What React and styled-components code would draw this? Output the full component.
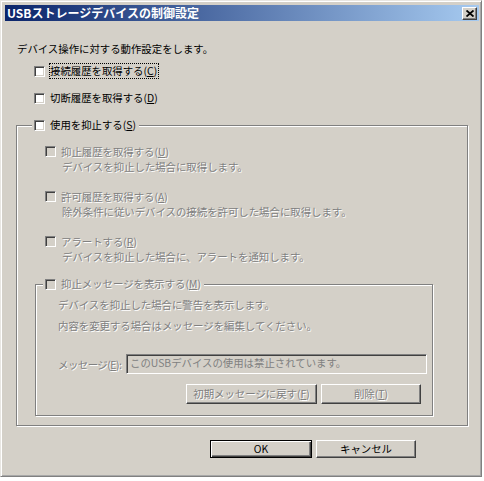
import styled, { createGlobalStyle } from 'styled-components';

const GlobalStyle = createGlobalStyle`
  html, body {
    margin: 0;
    padding: 0;
    background: #fff;
  }
  body {
    font-family: 'Noto Sans CJK JP', 'Noto Sans', sans-serif;
    font-size: 10.4px;
    color: #000;
  }
  * {
    box-sizing: border-box;
  }
`;

const Checkbox = ({ disabled }) => <Box $disabled={disabled} />;

const CheckRow = ({ label, disabled, focused, lh = 14 }) => (
  <Row $lh={lh}>
    <Checkbox disabled={disabled} />
    <Label $disabled={disabled} $focused={focused}>
      {label}
    </Label>
  </Row>
);

const Item = ({ label, desc }) => (
  <ItemBlock>
    <CheckRow label={label} disabled lh={13} />
    <Desc>{desc}</Desc>
  </ItemBlock>
);

const App = () => {
  return (
    <>
      <GlobalStyle />
      <Window>
        <TitleBar>
          <span>USBストレージデバイスの制御設定</span>
          <CloseButton>
            <svg width='8' height='7' viewBox='0 0 8 7'>
              <path d='M0.5 0.5 L7.5 6.5 M7.5 0.5 L0.5 6.5' stroke='#000' strokeWidth='1.8' />
            </svg>
          </CloseButton>
        </TitleBar>
        <Body>
          <Intro>デバイス操作に対する動作設定をします。</Intro>
          <TopRow>
            <CheckRow
              focused
              label={
                <>
                  接続履歴を取得する(<u>C</u>)
                </>
              }
            />
          </TopRow>
          <TopRow $gap={13}>
            <CheckRow
              label={
                <>
                  切断履歴を取得する(<u>D</u>)
                </>
              }
            />
          </TopRow>
          <OuterGroup>
            <Legend $ml={15}>
              <CheckRow
                label={
                  <>
                    使用を抑止する(<u>S</u>)
                  </>
                }
              />
            </Legend>
            <OuterBody>
              <Item
                label={
                  <>
                    抑止履歴を取得する(<u>U</u>)
                  </>
                }
                desc='デバイスを抑止した場合に取得します。'
              />
              <Item
                label={
                  <>
                    許可履歴を取得する(<u>A</u>)
                  </>
                }
                desc='除外条件に従いデバイスの接続を許可した場合に取得します。'
              />
              <Item
                label={
                  <>
                    アラートする(<u>R</u>)
                  </>
                }
                desc='デバイスを抑止した場合に、アラートを通知します。'
              />
              <InnerGroup>
                <Legend $ml={7}>
                  <CheckRow
                    disabled
                    label={
                      <>
                        抑止メッセージを表示する(<u>M</u>)
                      </>
                    }
                  />
                </Legend>
                <InnerBody>
                  <Note>デバイスを抑止した場合に警告を表示します。</Note>
                  <Note $gap={7}>内容を変更する場合はメッセージを編集してください。</Note>
                  <MessageRow>
                    <MessageLabel>
                      メッセージ(<u>E</u>):
                    </MessageLabel>
                    <MessageInput>このUSBデバイスの使用は禁止されています。</MessageInput>
                  </MessageRow>
                  <ButtonRow>
                    <Button $w={131} $h={20} disabled>
                      初期メッセージに戻す(<u>F</u>)
                    </Button>
                    <Button $w={100} $h={20} disabled>
                      削除(<u>T</u>)
                    </Button>
                  </ButtonRow>
                </InnerBody>
              </InnerGroup>
            </OuterBody>
          </OuterGroup>
          <Footer>
            <Button $w={102} $h={18} $default>
              OK
            </Button>
            <Button $w={100} $h={18}>
              キャンセル
            </Button>
          </Footer>
        </Body>
      </Window>
    </>
  );
};

const Window = styled.div`
  display: flex;
  flex-direction: column;
  width: 482px;
  height: 477px;
  padding: 4px 2px 3px 4px;
  background: #d4d0c8;
  border: 1px solid;
  border-color: #e8e6e2 #808080 #808080 #e8e6e2;
  box-shadow: inset 1px 1px 0 #fff, inset -1px -1px 0 #a8a8a8;
`;

const TitleBar = styled.div`
  display: flex;
  align-items: center;
  justify-content: space-between;
  height: 16px;
  padding: 0 2px 0 2px;
  background: linear-gradient(to right, #0a246a, #a6caf0);
  color: #fff;
  font-weight: 700;
  font-size: 12px;
  line-height: 16px;
`;

const CloseButton = styled.button`
  display: flex;
  align-items: center;
  justify-content: center;
  width: 15px;
  height: 13px;
  padding: 0;
  background: #d4d0c8;
  border: 1px solid;
  border-color: #fff #404040 #404040 #fff;
  box-shadow: inset -1px -1px 0 #808080;
`;

const Body = styled.div`
  display: flex;
  flex-direction: column;
  padding: 0 0 0 11px;
`;

const Intro = styled.div`
  margin: 21px 0 0 1px;
  line-height: 14px;
`;

const TopRow = styled.div`
  margin: ${({ $gap }) => $gap || 8}px 0 0 18px;
`;

const Row = styled.div`
  display: flex;
  align-items: center;
  gap: 5px;
  height: ${({ $lh }) => $lh}px;
  line-height: ${({ $lh }) => $lh}px;
  white-space: nowrap;
`;

const Box = styled.span`
  flex: none;
  width: 11px;
  height: 11px;
  background: ${({ $disabled }) => ($disabled ? '#d4d0c8' : '#fff')};
  border: 1px solid;
  border-color: #808080 #fff #fff #808080;
  box-shadow: inset 1px 1px 0 #404040, inset -1px -1px 0 #d4d0c8;
`;

const Label = styled.span`
  padding: 0 1px 0 0;
  outline: ${({ $focused }) => ($focused ? '1px dotted #000' : 'none')};
  outline-offset: 0;
  color: ${({ $disabled }) => ($disabled ? '#808080' : '#000')};
  text-shadow: ${({ $disabled }) => ($disabled ? '1px 1px 0 #fff' : 'none')};
  u {
    text-underline-offset: 1px;
  }
`;

const Group = styled.fieldset`
  margin: 0;
  padding: 0;
  min-width: 0;
  border: 1px solid #808080;
  box-shadow: inset 1px 1px 0 #fff, 1px 1px 0 #fff;
`;

const OuterGroup = styled(Group)`
  width: 452px;
  margin-top: 13px;
`;

const InnerGroup = styled(Group)`
  width: 398px;
  margin: 14px 0 0 -10px;
`;

const Legend = styled.legend`
  margin-left: ${({ $ml }) => $ml}px;
  padding: 0 2px;
  background: #d4d0c8;
`;

const OuterBody = styled.div`
  padding: 13px 10px 9px 28px;
`;

const ItemBlock = styled.div`
  & + & {
    margin-top: 17px;
  }
`;

const Desc = styled.div`
  margin: 2px 0 0 17px;
  line-height: 13px;
  color: #808080;
  text-shadow: 1px 1px 0 #fff;
  white-space: nowrap;
`;

const InnerBody = styled.div`
  padding: 7px 11px 11px 22px;
`;

const Note = styled.div`
  margin-top: ${({ $gap }) => $gap || 0}px;
  line-height: 14px;
  color: #808080;
  text-shadow: 1px 1px 0 #fff;
`;

const MessageRow = styled.div`
  display: flex;
  align-items: center;
  margin-top: 21px;
  height: 20px;
`;

const MessageLabel = styled.span`
  width: 68px;
  flex: none;
  letter-spacing: -0.5px;
  white-space: nowrap;
  color: #808080;
  text-shadow: 1px 1px 0 #fff;
`;

const MessageInput = styled.div`
  flex: none;
  width: 301px;
  height: 20px;
  padding: 0 3px;
  line-height: 16px;
  background: #d4d0c8;
  color: #808080;
  border: 1px solid;
  border-color: #808080 #fff #fff #808080;
  box-shadow: inset 1px 1px 0 #404040, inset -1px -1px 0 #d4d0c8;
  white-space: nowrap;
`;

const ButtonRow = styled.div`
  display: flex;
  justify-content: flex-end;
  gap: 4px;
  margin-top: 10px;
`;

const Button = styled.button`
  width: ${({ $w }) => $w}px;
  height: ${({ $h }) => $h}px;
  padding: 0;
  font-family: inherit;
  font-size: 10.4px;
  line-height: 14px;
  background: #d4d0c8;
  color: ${({ disabled }) => (disabled ? '#808080' : '#000')};
  text-shadow: ${({ disabled }) => (disabled ? '1px 1px 0 #fff' : 'none')};
  border: 1px solid;
  border-color: ${({ $default }) => ($default ? '#000' : '#fff #404040 #404040 #fff')};
  box-shadow: ${({ $default }) =>
    $default ? 'inset 1px 1px 0 #fff, inset -1px -1px 0 #404040, inset -2px -2px 0 #808080' : 'inset -1px -1px 0 #808080'};
`;

const Footer = styled.div`
  display: flex;
  justify-content: flex-end;
  gap: 4px;
  margin-top: 14px;
  padding-right: 63px;
`;

export default App;
